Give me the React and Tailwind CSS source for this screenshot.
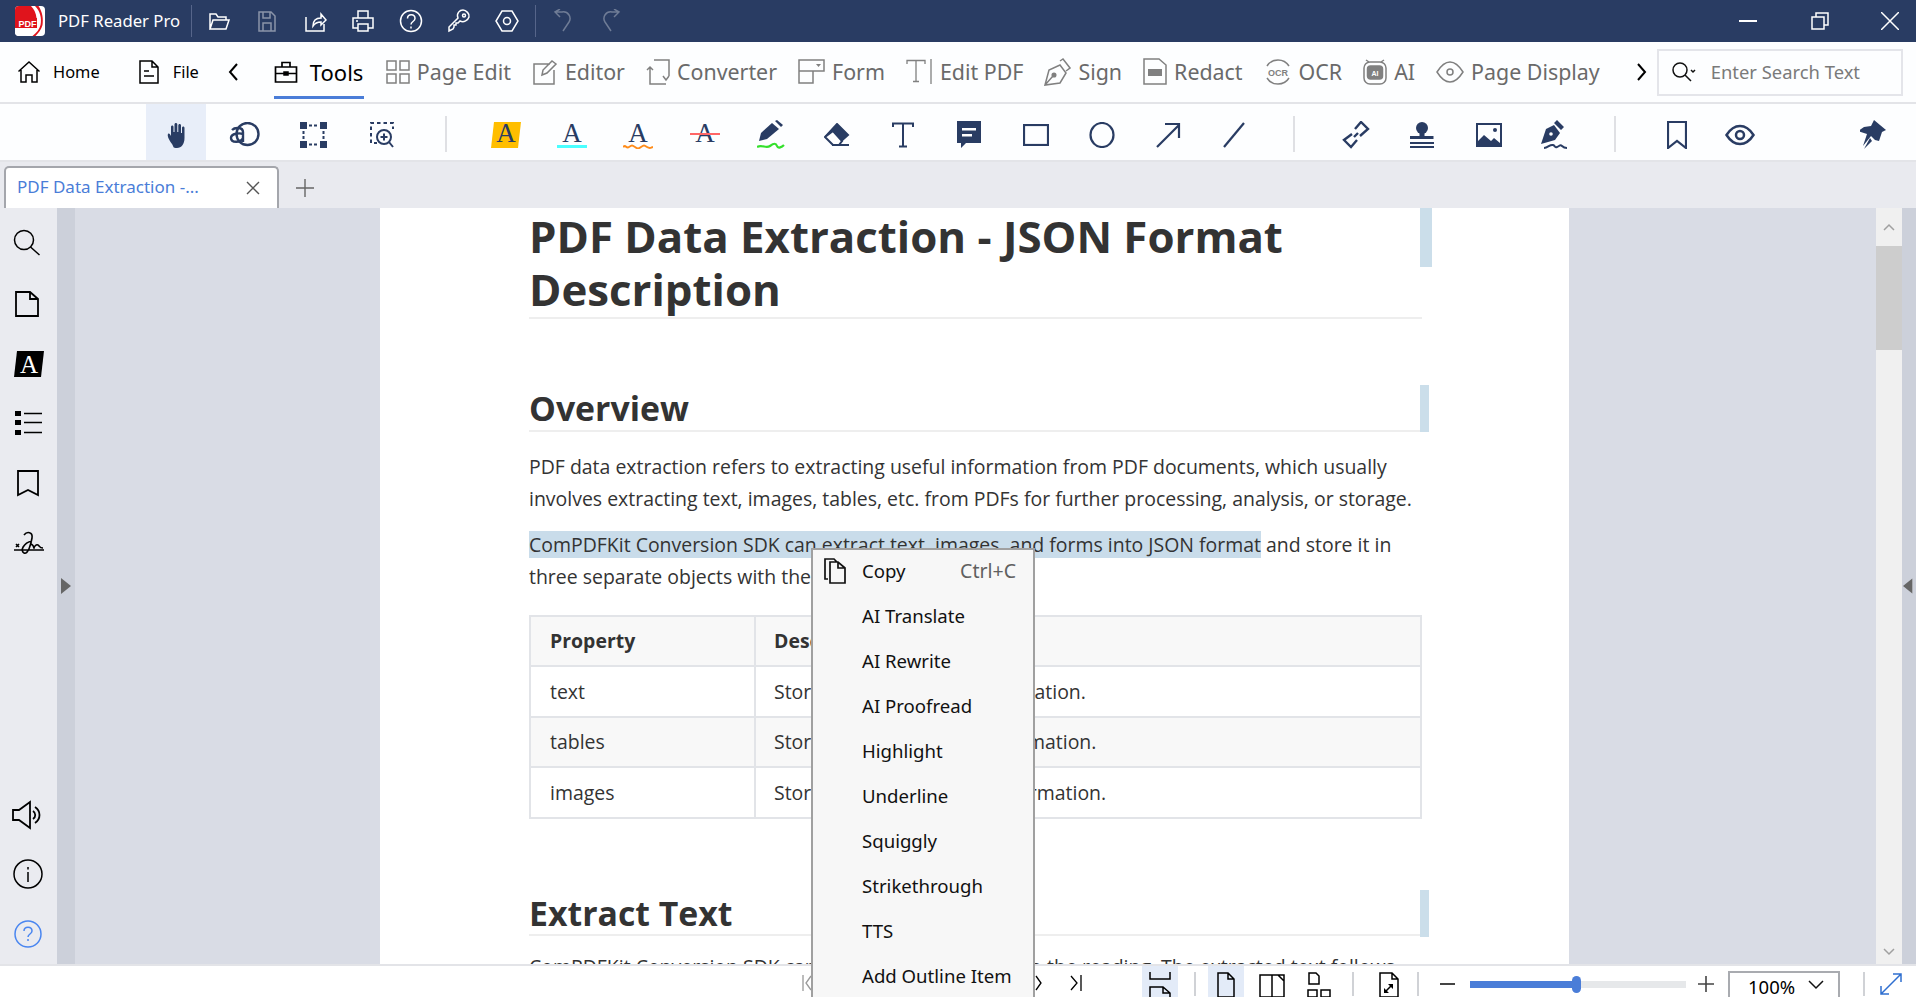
import React from 'react';

const Ico = ({ w = 24, h = 24, sw = 1.5, children, className = '' }) => (
  <svg width={w} height={h} viewBox={`0 0 ${w} ${h}`} fill="none" stroke="currentColor" strokeWidth={sw} className={className}>
    {children}
  </svg>
);

// title bar
const Logo = () => (
  <svg width="30" height="30" viewBox="0 0 30 30" className="shrink-0">
    <rect width="30" height="30" rx="4" fill="#fff" />
    <path d="M4 0h12c3 3 5 7 5.500 12H0V4a4 4 0 0 1 4-4z" fill="#e0141c" />
    <path d="M20 0c5 5 7 12 5.500 19-1 4-4 8-8 11h3c3-3 6-7 7-11 1-6 0-13-4-19z" fill="#e0141c" />
    <path d="M0 22h20c-2 3-5 6-9 8H4a4 4 0 0 1-4-4z" fill="#fff" />
    <rect x="0" y="12" width="22" height="10" fill="#e0141c" />
    <text x="3.500" y="20.500" fontSize="9" fontWeight="700" fill="#fff" className="font-['Liberation_Sans']">PDF</text>
  </svg>
);
const OpenIcon = () => <Ico><path d="M3 20V5h6l2 3h8v3M3 20l3-9h16l-3 9z" /></Ico>;
const SaveIcon = () => <Ico><path d="M4 3h12l4 4v15H4zM8 3v6h7V3M8 22v-8h8v8" /></Ico>;
const ShareIcon = () => <Ico><path d="M3 8v14h18v-7M10 17c0-5 3-8 8-8V5l5 6-5 5v-3c-4 0-6 1-8 4z" /></Ico>;
const PrintIcon = () => <Ico><path d="M7 9V2h10v7M7 19H2V9h20v10h-5M7 15h10v7H7zM5 12h2" /></Ico>;
const HelpIcon = () => (
  <Ico>
    <circle cx="12" cy="12" r="10.5" />
    <path d="M8.5 9.5c0-5 7.5-5 7.5 0 0 3-4 3-4 6M12 17.5v2" />
  </Ico>
);
const KeyIcon = () => <Ico><path d="M2 22v-4l9-9c-2-5 2-8 5-8s7 4 6 7-5 6-9 4l-2 2H9v2H7v2l-1 2z" /><circle cx="17" cy="6.500" r="1.500" /></Ico>;
const HexIcon = () => (
  <Ico>
    <path d="M7 2h10l6 10-6 10H7L1 12z" />
    <circle cx="12" cy="12" r="3.500" />
  </Ico>
);
const UndoIcon = () => <Ico><path d="M10 22 16 13c3-5-1-11-7-10H3M7 8 2 3l5-3" /></Ico>;
const RedoIcon = () => <Ico><path d="M12 22 6 13C3 8 7 2 13 3h6M15 8l5-5-5-3" /></Ico>;

const TitleBar = () => {
  const divider = <span className="block w-[1px] h-[32px] bg-[#56658a]" />;
  const btn = 'w-[48px] flex justify-center';
  return (
    <div className="h-[42px] bg-[#293c63] flex items-center text-white shrink-0">
      <div className="ml-[15px]"><Logo /></div>
      <span className="ml-[13px] text-[16.700px] font-['Noto_Sans'] w-[123px] whitespace-nowrap">PDF Reader Pro</span>
      <span className="ml-[10px]">{divider}</span>
      <div className="ml-[3px] flex">
        <div className={btn}><OpenIcon /></div>
        <div className={btn + ' text-[#8a94a9]'}><SaveIcon /></div>
        <div className={btn}><ShareIcon /></div>
        <div className={btn}><PrintIcon /></div>
        <div className={btn}><HelpIcon /></div>
        <div className={btn}><KeyIcon /></div>
        <div className={btn}><HexIcon /></div>
      </div>
      <span className="ml-[4px]">{divider}</span>
      <div className="ml-[6px] flex text-[#6f7c96]">
        <div className="w-[46px] flex justify-center"><UndoIcon /></div>
        <div className="w-[46px] flex justify-center"><RedoIcon /></div>
      </div>
      <div className="ml-auto flex items-center">
        <svg width="18" height="2" className="mr-[54px]"><rect width="18" height="2" fill="#fff" /></svg>
        <Ico w={18} h={18} className="mr-[52px]"><path d="M1 5h12v12H1zM5 5V1h12v12h-4" /></Ico>
        <Ico w={18} h={18} className="mr-[17px]"><path d="M0 0l18 18M18 0 0 18" /></Ico>
      </div>
    </div>
  );
};

// menu row
const HomeIcon = () => <Ico><path d="M1.500 11.500 12 2l10.500 9.500M4 10v12h5v-7h6v7h5V10" /></Ico>;
const FileIcon = () => <Ico w={22} h={24}><path d="M2 1h12l6 6v16H2zM14 1v6h6M6 11h5M6 16h10" /></Ico>;
const ToolsIcon = () => (
  <Ico>
    <path d="M1.500 7h21v15h-21zM8 7V2.500h8V7M1.500 13.500h21" strokeWidth="1.700" />
    <rect x="10" y="12" width="4" height="3" fill="currentColor" />
  </Ico>
);
const PageEditIcon = () => <Ico><path d="M1 1h9v9H1zM14 1h9v9h-9zM1 14h9v9H1zM14 14h9v9h-9z" /></Ico>;
const EditorIcon = () => <Ico w={26} h={26}><path d="M18 5H2v20h20V11M10 16l1-5 9-9 4 3-9 9z" /></Ico>;
const ConverterIcon = () => <Ico w={24} h={26}><path d="M8 1h15v16M1 11l3-3 3 3M4 8v17h16M23 17l-3 4-3-4" /></Ico>;
const FormIcon = () => (
  <Ico w={27} h={25}>
    <path d="M1 1h25v11H15v12H1zM1 12h14" />
    <path d="M18 5h5l-2.500 3z" fill="currentColor" stroke="none" />
  </Ico>
);
const EditPdfIcon = () => <Ico w={27} h={25}><path d="M1 5V1.500h18V5M10 1.500v21M7 22.500h6M25 0v25" strokeWidth="1.300" /></Ico>;
const SignIcon = () => (
  <Ico w={27} h={28}>
    <path d="M1 27 5 12l11-5 6 8-6 10zM16 3l3-2 7 9-4 3M1 27l8-9" />
    <circle cx="10" cy="17" r="1.800" fill="currentColor" />
  </Ico>
);
const RedactIcon = () => (
  <Ico w={24} h={27}>
    <path d="M1 1h15l7 6v19H1z" />
    <rect x="5" y="11" width="14" height="7" fill="currentColor" stroke="none" />
  </Ico>
);
const OcrIcon = () => (
  <svg width="28" height="28" viewBox="0 0 28 28" fill="none" stroke="currentColor" strokeWidth="1.500">
    <path d="M3 8a13 13 0 0 1 22 0M3 20a13 13 0 0 0 22 0" />
    <text x="14" y="17.500" textAnchor="middle" fontSize="9" fontWeight="700" fill="currentColor" stroke="none" className="font-['Liberation_Sans']">OCR</text>
  </svg>
);
const AiIcon = () => (
  <svg width="24" height="27" viewBox="0 0 24 27" fill="none" stroke="currentColor" strokeWidth="1.500">
    <rect x="1" y="4" width="22" height="22" rx="6" />
    <path d="M3 2 6 4M21 2l-3 2" />
    <rect x="4.500" y="8" width="15" height="13" rx="3" fill="currentColor" />
    <text x="12" y="17.500" textAnchor="middle" fontSize="7" fontWeight="700" fill="#fff" stroke="none" className="font-['Liberation_Sans']">AI</text>
  </svg>
);
const PageDisplayIcon = () => (
  <Ico w={28} h={22}>
    <path d="M1 11C6 3 10 1 14 1s8 2 13 10c-5 8-9 10-13 10S6 19 1 11z" />
    <circle cx="14" cy="11" r="3" />
  </Ico>
);

const menuItems = [
  { label: 'Page Edit', Icon: PageEditIcon },
  { label: 'Editor', Icon: EditorIcon },
  { label: 'Converter', Icon: ConverterIcon },
  { label: 'Form', Icon: FormIcon },
  { label: 'Edit PDF', Icon: EditPdfIcon },
  { label: 'Sign', Icon: SignIcon },
  { label: 'Redact', Icon: RedactIcon },
  { label: 'OCR', Icon: OcrIcon },
  { label: 'AI', Icon: AiIcon },
  { label: 'Page Display', Icon: PageDisplayIcon },
];

const MenuRow = () => (
  <div className="h-[60px] bg-[#fdfeff] flex items-center font-['Noto_Sans'] shrink-0 text-[#000]">
    <div className="ml-[17px] flex items-center gap-[12px] text-[16.400px]"><HomeIcon /><span>Home</span></div>
    <div className="ml-[38px] flex items-center gap-[13px] text-[16.400px]"><FileIcon /><span>File</span></div>
    <svg width="12" height="20" viewBox="0 0 12 20" fill="none" stroke="#000" strokeWidth="2" className="ml-[28px]"><path d="M10 2 3 10l7 8" /></svg>
    <div className="ml-[35px] relative h-full flex items-center gap-[12px] text-[22px] text-black w-[90px]">
      <ToolsIcon />
      <span>Tools</span>
      <span className="absolute left-0 right-0 top-[54px] h-[3px] bg-[#4a7dd8]" />
    </div>
    <div className="ml-[22px] flex items-center gap-[21px]">
      {menuItems.map(({ label, Icon }) => (
        <div key={label} className="flex items-center gap-[7px] text-[21.400px] whitespace-nowrap text-[#6a6a6a]">
          <span className="text-[#808080] flex"><Icon /></span>
          <span>{label}</span>
        </div>
      ))}
    </div>
    <svg width="12" height="20" viewBox="0 0 12 20" fill="none" stroke="#000" strokeWidth="2" className="ml-[36px]"><path d="M2 2l7 8-7 8" /></svg>
    <div className="ml-[9px] w-[246px] h-[47px] border-2 border-[#e4e5ea] flex items-center pl-[12px]">
      <svg width="26" height="22" viewBox="0 0 26 22" fill="none" stroke="#111" strokeWidth="1.500">
        <circle cx="9" cy="9" r="7" /><path d="m14 14 6 6M20 9l2 2 2-2" />
      </svg>
      <span className="ml-[14px] text-[#7a7a7a] text-[18.400px] whitespace-nowrap">Enter Search Text</span>
    </div>
  </div>
);

// annotate toolbar
const HandIcon = () => (
  <svg width="24" height="26" viewBox="0 0 24 26" fill="currentColor">
    <path d="M6 22C3 18 1 14 2 12c1-1 2 0 3 2V5c0-2 2.500-2 2.500 0v5h1V2.500c0-2 2.800-2 2.800 0V10h1V3.500c0-2 2.700-2 2.700 0V11h1V6c0-2 2.500-2 2.500 0v10c0 6-3 10-7.500 10S8 25 6 22z" />
  </svg>
);
const ReadIcon = () => (
  <Ico w={31} h={25} sw={2.400}>
    <circle cx="18.500" cy="12" r="11" />
    <path d="M3 8c3-3 11-3 11 2v10M14 12c-3-1-12-1-12 4 0 5 10 5 12 0" />
  </Ico>
);
const SelectIcon = () => (
  <svg width="27" height="26" viewBox="0 0 27 26" fill="currentColor">
    <rect width="7" height="7" x="0" y="0" /><rect width="7" height="7" x="20" y="0" />
    <rect width="7" height="7" x="0" y="19" /><rect width="7" height="7" x="20" y="19" />
    <path d="M9 3.500h9M9 22.500h9M3.500 9v8M23.500 9v8" fill="none" stroke="currentColor" strokeWidth="2" strokeDasharray="3 2" />
  </svg>
);
const AreaZoomIcon = () => (
  <Ico w={26} h={26} sw={2}>
    <path d="M1 8V1h22v6M1 11v10h6" strokeDasharray="3.500 3" />
    <circle cx="14" cy="15" r="7" />
    <path d="M14 11.500v7M10.500 15h7M19 20l4 5" />
  </Ico>
);
const SerifA = ({ x = 13 }) => (
  <text x={x} y="21" textAnchor="middle" fontSize="27" fill="#293c63" className="font-['Liberation_Serif']">A</text>
);
const HighlightA = () => (
  <svg width="30" height="28" viewBox="0 0 30 28">
    <path d="M3 1h27l-3 26H0z" fill="#ffbe00" />
    <SerifA x={15} />
  </svg>
);
const TealA = () => (
  <svg width="30" height="28" viewBox="0 0 30 28">
    <SerifA x={15} />
    <rect x="0" y="24" width="30" height="3" fill="#4affff" />
  </svg>
);
const OrangeA = () => (
  <svg width="30" height="28" viewBox="0 0 30 28">
    <SerifA x={15} />
    <path d="M0 26c3-3 3 2 6 0s3-2 6 0 3 2 6 0 3-2 6 0 3 1 6 0" fill="none" stroke="#ff8c1a" strokeWidth="2" />
  </svg>
);
const StrikeA = () => (
  <svg width="30" height="28" viewBox="0 0 30 28">
    <SerifA x={15} />
    <rect x="0" y="12" width="30" height="2" fill="#f66" />
  </svg>
);
const PenIcon = () => (
  <svg width="28" height="30" viewBox="0 0 28 30" fill="currentColor">
    <path d="M2 21l2-8L15 3l7 6L10 19z" />
    <path d="M18 1l2-1 6 5-2 2z" />
    <path d="M0 27c5-3 9 2 13-1s6-3 7 0 5 1 7-1" fill="none" stroke="#34e02c" strokeWidth="2.200" />
  </svg>
);
const EraserIcon = () => (
  <svg width="26" height="24" viewBox="0 0 26 24" fill="none" stroke="currentColor" strokeWidth="2">
    <path d="M13 1l11 11-9 8-13-7z" fill="currentColor" />
    <path d="M1 14l8 8h6l3-4-9-10zM8 22h17" fill="#fff" />
  </svg>
);
const TextIcon = () => <Ico w={22} h={26} sw={2}><path d="M1 5V1.500h20V5M11 1.500v23M7 24.500h8" /></Ico>;
const CommentIcon = () => (
  <svg width="24" height="28" viewBox="0 0 24 28" fill="currentColor">
    <path d="M0 0h24v22H9l-5 5v-5H0z" />
    <path d="M5 7h14v2.500H5zM5 13h10v2.500H5z" fill="#fff" />
  </svg>
);
const RectIcon = () => <Ico w={26} h={22} sw={2.200}><rect x="1" y="1" width="24" height="20" /></Ico>;
const CircleIcon = () => <Ico w={26} h={26} sw={2.200}><ellipse cx="13" cy="13" rx="11.500" ry="12" /></Ico>;
const ArrowIcon = () => <Ico w={26} h={26} sw={2.200}><path d="M2 25 24 3M10 2h14v14" /></Ico>;
const LineIcon = () => <Ico w={24} h={26} sw={2.200}><path d="M2 25 22 1" /></Ico>;
const LinkIcon = () => (
  <Ico w={28} h={28} sw={2.400}>
    <path d="M10 13 2 19l7 7 6-7M18 15l8-7-7-7-6 7M12 16l4-4" />
  </Ico>
);
const StampIcon = () => (
  <svg width="26" height="26" viewBox="0 0 26 26" fill="currentColor">
    <circle cx="13" cy="6" r="6" />
    <path d="M10.500 9h5v5h9v3H1v-3h9.500z" />
    <rect x="1" y="20" width="24" height="2" /><rect x="1" y="24" width="24" height="2" />
  </svg>
);
const ImageIcon = () => (
  <svg width="26" height="24" viewBox="0 0 26 24" fill="currentColor">
    <path d="M0 0h26v24H0zM2 2v16l6-6 7 6 3-3 6 5V2z" fillRule="evenodd" />
    <circle cx="19" cy="7" r="2" />
  </svg>
);
const SignPenIcon = () => (
  <svg width="30" height="30" viewBox="0 0 30 30" fill="currentColor">
    <path d="M1 24 6 9l8-4 6 8-5 7zM14 3l3-3 7 7-3 3z" />
    <circle cx="11" cy="14" r="1.800" fill="#fff" />
    <path d="M4 28c4 0 6-4 9-3s1 3 4 2 3-3 5-1 3 2 5 2" fill="none" stroke="currentColor" strokeWidth="2" />
  </svg>
);
const BookmarkIcon = () => <Ico w={20} h={28} sw={2.200}><path d="M1 1h18v26l-9-7-9 7z" /></Ico>;
const EyeIcon = () => (
  <Ico w={30} h={22} sw={2.500}>
    <path d="M1.500 11C6 4 10 2 15 2s9 2 13.500 9C24 18 20 20 15 20S6 18 1.500 11z" />
    <circle cx="15" cy="11" r="4" />
  </Ico>
);
const PinIcon = () => (
  <svg width="26" height="30" viewBox="0 0 26 30" fill="currentColor">
    <path d="M14 0 26 10l-4 2-3 9-4-1-4-4-8 10 4-12-9-3 6-4 7-1z" />
    <path d="M10 18 4 29l8-8z" />
  </svg>
);

const Cell = ({ className, children }) => (
  <div className={'h-full pt-[5px] flex items-center justify-center shrink-0 ' + className}>{children}</div>
);
const ToolSep = ({ className }) => <span className={'w-[2px] h-[36px] mt-[4px] bg-[#dfe0e4] shrink-0 ' + className} />;

const Toolbar = () => (
  <div className="h-[60px] bg-[#fdfeff] border-y-2 border-[#e3e4e8] flex items-center text-[#293c63] shrink-0">
    <Cell className="ml-[146px] w-[60px] pl-[4px] bg-[#e8eef9]"><HandIcon /></Cell>
    <Cell className="ml-[4px] w-[69px]"><ReadIcon /></Cell>
    <Cell className="w-[69px]"><SelectIcon /></Cell>
    <Cell className="w-[69px]"><AreaZoomIcon /></Cell>
    <ToolSep className="ml-[28px]" />
    <Cell className="ml-[26px] w-[66.200px]"><HighlightA /></Cell>
    <Cell className="w-[66.200px]"><TealA /></Cell>
    <Cell className="w-[66.200px]"><OrangeA /></Cell>
    <Cell className="w-[66.200px]"><StrikeA /></Cell>
    <Cell className="w-[66.200px]"><PenIcon /></Cell>
    <Cell className="w-[66.200px]"><EraserIcon /></Cell>
    <Cell className="w-[66.200px]"><TextIcon /></Cell>
    <Cell className="w-[66.200px]"><CommentIcon /></Cell>
    <Cell className="w-[66.200px]"><RectIcon /></Cell>
    <Cell className="w-[66.200px]"><CircleIcon /></Cell>
    <Cell className="w-[66.200px]"><ArrowIcon /></Cell>
    <Cell className="w-[66.200px]"><LineIcon /></Cell>
    <ToolSep className="ml-[26px]" />
    <Cell className="ml-[27px] w-[66.600px]"><LinkIcon /></Cell>
    <Cell className="w-[66.600px]"><StampIcon /></Cell>
    <Cell className="w-[66.600px]"><ImageIcon /></Cell>
    <Cell className="w-[66.600px]"><SignPenIcon /></Cell>
    <ToolSep className="ml-[25px]" />
    <Cell className="ml-[30px] w-[63px]"><BookmarkIcon /></Cell>
    <Cell className="w-[63px]"><EyeIcon /></Cell>
    <Cell className="ml-auto mr-[23px] w-[40px]"><PinIcon /></Cell>
  </div>
);

const TabBar = () => (
  <div className="h-[46px] bg-[#e9eaef] flex items-end font-['Noto_Sans'] shrink-0">
    <div className="ml-[4px] w-[275px] h-[42px] bg-white border-2 border-b-0 border-[#a4a6ac] rounded-t-[5px] flex items-center pl-[11px] pr-[16px] pb-[3px]">
      <span className="text-[#4a7dd8] text-[17px] whitespace-nowrap">PDF Data Extraction -...</span>
      <svg width="16" height="16" viewBox="0 0 16 16" stroke="#555" strokeWidth="1.400" className="ml-auto mt-[2px]"><path d="M2 2l12 12M14 2 2 14" /></svg>
    </div>
    <svg width="18" height="18" viewBox="0 0 18 18" stroke="#666" strokeWidth="1.400" className="ml-[17px] mb-[11px]"><path d="M9 0v18M0 9h18" /></svg>
  </div>
);

// left rail
const SideBar = () => (
  <div className="w-[57px] bg-[#eaebf0] flex flex-col items-center shrink-0 text-black">
    <div className="mt-[21px] flex flex-col items-center gap-[33px]">
      <Ico w={28} h={28} className="-ml-[6px]"><circle cx="12" cy="11" r="9.500" /><path d="m18.500 18 9 8" /></Ico>
      <Ico w={24} h={28} sw={1.800} className="-ml-[4px]"><path d="M1 2h14l8 7v17H1zM15 2v7h8" /></Ico>
      <svg width="30" height="28" viewBox="0 0 30 28" className="-my-[1px]">
        <path d="M3 1h27l-3 26H0z" fill="#000" />
        <text x="15" y="23" textAnchor="middle" fontSize="25" fill="#fff" className="font-['Liberation_Serif']">A</text>
      </svg>
      <svg width="27" height="26" viewBox="0 0 27 26" fill="#000">
        <rect x="0" y="1" width="6" height="5" /><rect x="0" y="10" width="6" height="5" /><rect x="0" y="20" width="6" height="5" />
        <path d="M9 3.500h18M9 12.500h18M9 22.500h18" stroke="#000" strokeWidth="1.500" />
      </svg>
      <Ico w={24} h={28} sw={1.800} className="-ml-[1px]"><path d="M2 2h20v24l-10-5-10 5z" /></Ico>
      <svg width="30" height="28" viewBox="0 0 30 28" fill="none" stroke="#000" strokeWidth="1.600">
        <path d="M0 20h30M2 14l3 3M5 14l-3 3M10 5c3-4 9-3 8 3s-4 17-8 15-1-10 8-12M17 14c3 1 3 5 3 4s2-4 4-3 1 3 5 3" />
      </svg>
    </div>
    <div className="mt-auto mb-[16px] -ml-[2px] flex flex-col items-center gap-[29px]">
      <Ico w={32} h={30} sw={1.800}>
        <path d="M1 10h6l11-8v26L7 20H1zM21 11c3 2 3 6 0 8M23 7c6 4 6 12 0 16" />
      </Ico>
      <Ico w={30} h={30} sw={1.500} className="mb-[2px]"><circle cx="15" cy="15" r="14" /><path d="M15 13v10M15 8v2.500" /></Ico>
      <svg width="28" height="28" viewBox="0 0 28 28" fill="none" stroke="#4a86f0" strokeWidth="1.500">
        <circle cx="14" cy="14" r="13" />
        <path d="M10 11c0-5 8-5 8 0 0 3-4 3-4 6M14 19v2" />
      </svg>
    </div>
  </div>
);

const Divider = ({ dir }) => (
  <div className="w-full h-full flex items-center">
    <svg width="14" height="20" viewBox="0 0 14 20" fill="#666" className={dir === 'left' ? 'ml-[1px]' : 'ml-[4px]'}>
      {dir === 'right' ? <path d="M0 2l10 8-10 8z" /> : <path d="M10 2 0 10l10 8z" />}
    </svg>
  </div>
);

const rows = [
  { prop: 'text', desc: 'Stores extracted text information.', even: false },
  { prop: 'tables', desc: 'Stores extracted table information.', even: true },
  { prop: 'images', desc: 'Stores extracted image information.', even: false },
];

const Document = () => (
  <div className="relative w-[1189px] h-full overflow-hidden bg-white shrink-0 font-['Open_Sans'] text-[#333]">
    <div className="ml-[149px] w-[893px] pt-[2px]">
      <h1 className="text-[43.800px] leading-[53px] font-bold border-b-2 border-[#eeeeee] pb-[1px]">
        PDF Data Extraction - JSON Format<br />Description
      </h1>
      <h2 className="mt-[68px] text-[33.800px] leading-[42px] font-bold border-b-2 border-[#eeeeee] pb-[1px]">Overview</h2>
      <p className="mt-[19px] text-[19.470px] leading-[31.500px] whitespace-nowrap">
        PDF data extraction refers to extracting useful information from PDF documents, which usually<br />
        involves extracting text, images, tables, etc. from PDFs for further processing, analysis, or storage.
      </p>
      <p className="mt-[15px] text-[19.470px] leading-[31.500px] whitespace-nowrap">
        <span className="bg-[#c9dcea]">ComPDFKit Conversion SDK can extract text, images, and forms into JSON format</span> and store it in<br />
        three separate objects with the following properties:
      </p>
      <table className="mt-[22.500px] w-full border-collapse text-[19.470px]">
        <thead>
          <tr className="h-[50.500px] bg-[#f8f8f8]">
            <th className="border-2 border-[#e2e4e8] w-[225px] pl-[19px] text-left font-bold">Property</th>
            <th className="border-2 border-[#e2e4e8] pl-[18px] text-left font-bold">Description</th>
          </tr>
        </thead>
        <tbody>
          {rows.map((r) => (
            <tr key={r.prop} className={'h-[50.500px] ' + (r.even ? 'bg-[#f8f8f8]' : 'bg-white')}>
              <td className="border-2 border-[#e2e4e8] pl-[19px]">{r.prop}</td>
              <td className="border-2 border-[#e2e4e8] pl-[18px] [word-spacing:2px]">{r.desc}</td>
            </tr>
          ))}
        </tbody>
      </table>
      <h2 className="mt-[73.500px] text-[33.800px] leading-[42px] font-bold border-b-2 border-[#eeeeee]">Extract Text</h2>
      <p className="mt-[15px] text-[19.470px] leading-[31.500px] whitespace-nowrap">ComPDFKit Conversion SDK can extract text according to the reading. The extracted text follows</p>
    </div>
    <span className="absolute left-[1040px] top-0 w-[12px] h-[59px] bg-[#cbdeea]" />
    <span className="absolute left-[1040px] top-[177px] w-[9px] h-[47px] bg-[#cbdeea]" />
    <span className="absolute left-[1040px] top-[682px] w-[9px] h-[47px] bg-[#cbdeea]" />
  </div>
);

const ScrollBar = () => (
  <div className="w-[26px] bg-[#f0f0f0] flex flex-col items-center shrink-0">
    <div className="h-[38px] w-full flex items-center justify-center">
      <svg width="12" height="8" viewBox="0 0 12 8" fill="none" stroke="#a0a0a0" strokeWidth="1.500"><path d="M1 7l5-5 5 5" /></svg>
    </div>
    <div className="h-[104px] w-full bg-[#cdcdcd]" />
    <div className="mt-auto h-[24px] w-full flex items-center justify-center">
      <svg width="12" height="8" viewBox="0 0 12 8" fill="none" stroke="#a0a0a0" strokeWidth="1.500"><path d="M1 1l5 5 5-5" /></svg>
    </div>
  </div>
);

// context menu
const contextItems = ['AI Translate', 'AI Rewrite', 'AI Proofread', 'Highlight', 'Underline', 'Squiggly', 'Strikethrough', 'TTS', 'Add Outline Item'];

const ContextMenu = () => (
  <div className="absolute left-[811px] top-[548px] w-[224px] h-[449px] bg-[#f7f7f7] border-2 border-b-0 border-[#a0a0a0] font-['Noto_Sans'] text-[18.600px] text-[#111]">
    <div className="h-[43px] pb-[2px] flex items-center relative">
      <svg width="22" height="26" viewBox="0 0 22 26" fill="none" stroke="#111" strokeWidth="1.700" className="absolute left-[11px] top-[8px]">
        <path d="M4 21H1V1h9l3 3M6 4h8l7 6v15H6zM14 4v6h7" />
      </svg>
      <span className="ml-[49px]">Copy</span>
      <span className="ml-auto mr-[17px] text-[#606060] text-[19.500px]">Ctrl+C</span>
    </div>
    {contextItems.map((item) => (
      <div key={item} className="h-[45px] flex items-center pl-[49px] whitespace-nowrap">{item}</div>
    ))}
  </div>
);

// bottom status bar
const BarSep = ({ className }) => <span className={'w-[2px] h-[24px] mt-[6px] bg-[#d0d2d6] shrink-0 ' + className} />;

const StatusBar = () => (
  <div className="h-[33px] border-t-2 border-[#e3e4e8] bg-white flex overflow-hidden text-black font-['Noto_Sans'] shrink-0">
    <svg width="10" height="18" viewBox="0 0 10 18" fill="none" stroke="#999" strokeWidth="1.300" className="ml-[802px] mt-[8px]"><path d="M1 1v16M9 2 4 9l5 7" /></svg>
    <svg width="10" height="18" viewBox="0 0 10 18" fill="none" stroke="#000" strokeWidth="1.300" className="ml-[222px] mt-[8px]"><path d="M2 2l5 7-5 7" /></svg>
    <svg width="14" height="18" viewBox="0 0 14 18" fill="none" stroke="#000" strokeWidth="1.300" className="ml-[25px] mt-[8px]"><path d="M2 2l6 7-6 7M12 1v16" /></svg>
    <div className="ml-[59px] w-[36px] h-full bg-[#e3ebf8] flex justify-center shrink-0">
      <Ico w={22} h={31} sw={1.500}><path d="M1 6v7h20V6M1 31V21h13l7 6v4M14 21v6h7" /></Ico>
    </div>
    <BarSep className="ml-[16px]" />
    <div className="ml-[12px] w-[36px] h-full bg-[#e3ebf8] flex justify-center shrink-0">
      <Ico w={18} h={25} sw={1.500} className="mt-[6px]"><path d="M1 1h10l6 6v18H1zM11 1v6h6" /></Ico>
    </div>
    <Ico w={26} h={25} sw={1.500} className="ml-[15px] mt-[6px]"><path d="M1 3h24v22H1zM13 3v22M15 3h4l6 6" /></Ico>
    <Ico w={24} h={25} sw={1.500} className="ml-[22px] mt-[6px]"><path d="M2 1h7l3 3v8H2zM1 18h9v7H1zM14 18h9v7h-9z" /></Ico>
    <BarSep className="ml-[21px]" />
    <Ico w={20} h={25} sw={1.500} className="ml-[25px] mt-[6px]"><path d="M1 1h12l6 6v18H1zM13 1v6h6M6 20l7-7" /><path d="M9 12h5v5zM5 16v5h5z" fill="currentColor" stroke="none" /></Ico>
    <BarSep className="ml-[18px]" />
    <span className="ml-[21px] mt-[17px] w-[15px] h-[2px] bg-[#444] shrink-0" />
    <div className="ml-[15px] w-[216px] h-[7px] mt-[15px] bg-[#e6e8ea] relative shrink-0">
      <div className="h-full w-[107px] bg-[#4a7dd8]" />
      <span className="absolute left-[102px] -top-[5px] w-[9px] h-[17px] rounded-full bg-[#4a7dd8]" />
    </div>
    <svg width="16" height="16" viewBox="0 0 16 16" stroke="#444" strokeWidth="1.600" className="ml-[12px] mt-[10px] shrink-0"><path d="M8 0v16M0 8h16" /></svg>
    <div className="ml-[14px] w-[112px] mt-[5px] h-[30px] border-2 border-[#a9abb0] flex items-start pl-[18px] text-[18.500px] shrink-0">
      <span>100%</span>
      <svg width="16" height="10" viewBox="0 0 16 10" fill="none" stroke="#111" strokeWidth="1.500" className="ml-[13px] mt-[7px]"><path d="M1 1l7 7 7-7" /></svg>
    </div>
    <BarSep className="ml-[23px]" />
    <svg width="24" height="24" viewBox="0 0 24 24" fill="none" stroke="#2f6fd0" strokeWidth="1.500" className="ml-[14px] mt-[6px] shrink-0"><path d="M2 22 22 2M14 2h8v8M2 14v8h8" /></svg>
  </div>
);

export default function App() {
  return (
    <div className="relative w-[1916px] h-[997px] overflow-hidden flex flex-col bg-white">
      <TitleBar />
      <MenuRow />
      <Toolbar />
      <TabBar />
      <div className="flex-1 min-h-0 flex">
        <SideBar />
        <div className="w-[18px] bg-[#ccd0da] shrink-0"><Divider dir="right" /></div>
        <div className="flex-1 min-w-0 bg-[#d9dce5] pl-[305px]"><Document /></div>
        <ScrollBar />
        <div className="w-[14px] bg-[#ccd0da] shrink-0"><Divider dir="left" /></div>
      </div>
      <StatusBar />
      <ContextMenu />
    </div>
  );
}
